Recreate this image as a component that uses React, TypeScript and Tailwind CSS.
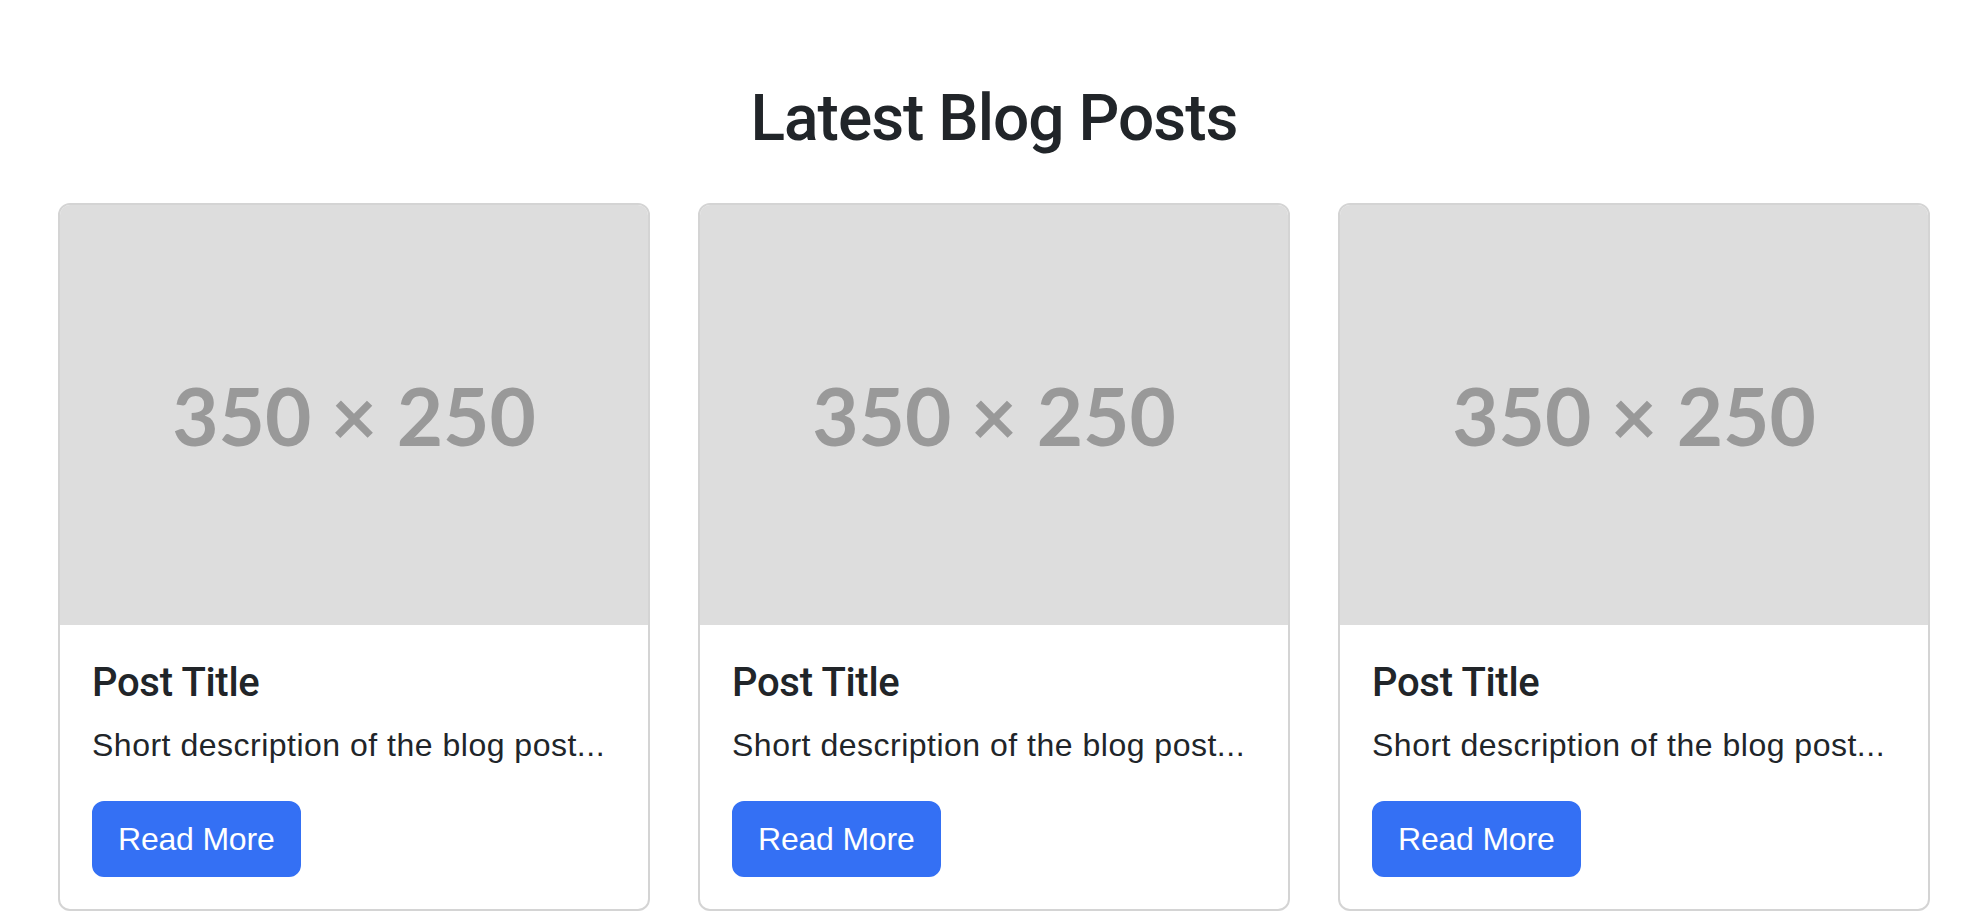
const posts = [1, 2, 3].map((id) => ({
  id,
  title: 'Post Title',
  excerpt: 'Short description of the blog post...',
}))

function PostCard({ title, excerpt }: { title: string; excerpt: string }) {
  return (
    <div className="flex flex-col overflow-hidden rounded-[12px] border-2 border-[#d4d4d4] bg-white">
      <div className="flex aspect-[350/250] w-full items-center justify-center bg-[#dddddd]">
        <span className="font-['Lato',sans-serif] text-[80px] font-bold leading-none text-[#999999]">
          350 × 250
        </span>
      </div>
      <div className="p-[32px]">
        <h5 className="mb-[14px] pt-[2px] font-['Roboto',sans-serif] text-[40px] font-medium leading-[48px] tracking-[-0.3px] text-[#212529]">
          {title}
        </h5>
        <p className="mb-[32px] text-[32px] leading-[48px] tracking-[0.5px] text-[#212529]">{excerpt}</p>
        <a
          href="#"
          className="inline-block rounded-[12px] border-2 border-[#3470f4] bg-[#3470f4] px-[24px] py-[12px] text-[32px] leading-[48px] tracking-[-0.2px] text-white"
        >
          Read More
        </a>
      </div>
    </div>
  )
}

export default function App() {
  return (
    <div className="min-h-screen bg-white font-['Liberation_Sans',Arial,sans-serif]">
      <section className="mx-auto w-[1920px] px-[24px] pt-[80px]">
        <h2 className="mb-[46px] text-center font-['Roboto',sans-serif] text-[64px] font-medium leading-[77px] tracking-[-1px] text-[#212529]">
          Latest Blog Posts
        </h2>
        <div className="grid grid-cols-3 gap-[48px]">
          {posts.map((p) => (
            <PostCard key={p.id} title={p.title} excerpt={p.excerpt} />
          ))}
        </div>
      </section>
    </div>
  )
}
